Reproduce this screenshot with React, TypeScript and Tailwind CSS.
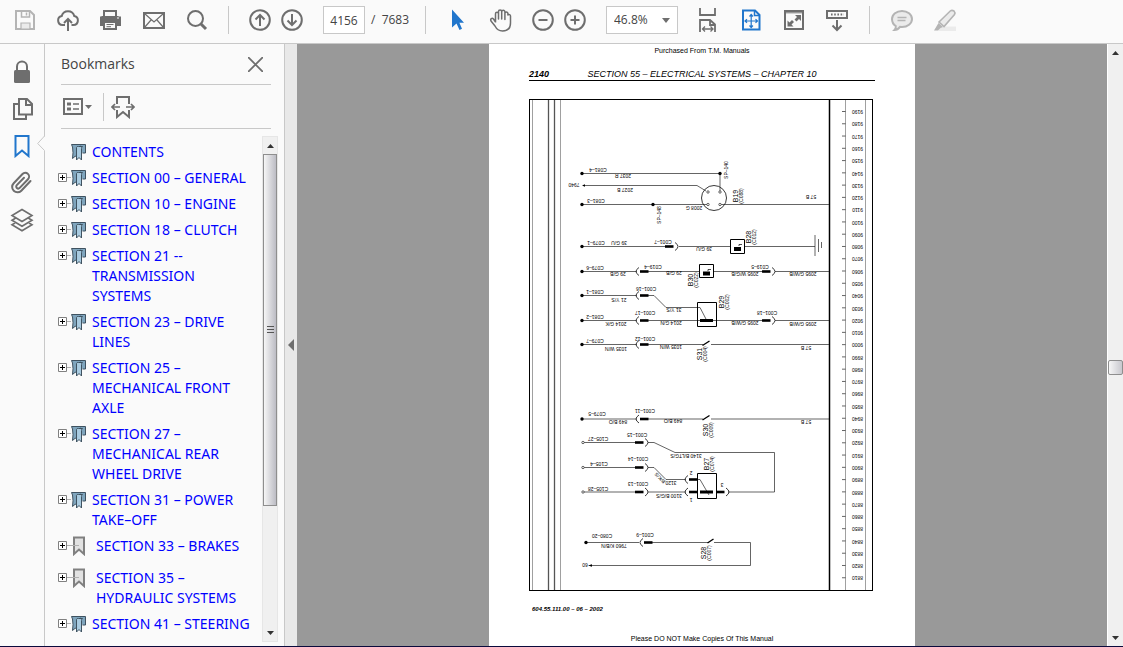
import type { ReactNode } from 'react';

const BOOKMARKS = [
  { title: ['CONTENTS'], kind: 'leaf' },
  { title: ['SECTION 00 – GENERAL'], kind: 'group' },
  { title: ['SECTION 10 – ENGINE'], kind: 'group' },
  { title: ['SECTION 18 – CLUTCH'], kind: 'group' },
  { title: ['SECTION 21 --', 'TRANSMISSION', 'SYSTEMS'], kind: 'group' },
  { title: ['SECTION 23 – DRIVE', 'LINES'], kind: 'group' },
  { title: ['SECTION 25 –', 'MECHANICAL FRONT', 'AXLE'], kind: 'group' },
  { title: ['SECTION 27 –', 'MECHANICAL REAR', 'WHEEL DRIVE'], kind: 'group' },
  { title: ['SECTION 31 – POWER', 'TAKE–OFF'], kind: 'group' },
  { title: ['SECTION 33 – BRAKES'], kind: 'plain' },
  { title: ['SECTION 35 –', 'HYDRAULIC SYSTEMS'], kind: 'plain' },
  { title: ['SECTION 41 – STEERING'], kind: 'group' },
];

// text, centre x, centre y
type Label = [string, number, number];

// wire and connector labels, printed upside down
const WIRE_LABELS: Label[] = [
  ['C081–4', 69, 71], ['2037 R', 94, 77], ['7940', 45, 86], ['2027 B', 96, 91],
  ['C081–3', 67, 102], ['2008 G', 165, 109], ['57 B', 282, 98],
  ['C079–1', 67, 144], ['39 G/U', 90, 144], ['C001–7', 134, 143], ['39 G/U', 175, 150],
  ['C079–6', 66, 169], ['29 G/B', 89, 175], ['C019–4', 124, 168], ['29 G/B', 145, 174],
  ['C019–5', 231, 168], ['2095 W/G/B', 216, 175], ['2095 G/W/B', 274, 175],
  ['C081–1', 66, 193], ['21 Y/S', 90, 201], ['C001–16', 117, 190], ['31 Y/S', 145, 211],
  ['C081–2', 66, 218], ['2014 G/K', 87, 225], ['C001–17', 116, 214], ['2014 G/N', 142, 224],
  ['C001–18', 238, 214], ['2095 G/W/B', 216, 224], ['2095 G/W/B', 274, 225],
  ['C079–7', 66, 242], ['1035 W/N', 87, 250], ['C001–12', 116, 240], ['1035 W/N', 142, 248], ['57 B', 277, 249],
  ['C079–5', 68, 315], ['849 B/O', 89, 323], ['C001–11', 116, 312], ['849 B/O', 144, 322], ['57 B', 277, 323],
  ['C105–27', 69, 340], ['C001–15', 108, 336], ['3140 B/LTG/S', 157, 357],
  ['C105–4', 70, 365], ['C001–14', 109, 360], ['3120', 142, 384],
  ['C105–28', 69, 390], ['C001–13', 109, 385], ['3100 B/G/S', 140, 397],
  ['2', 162, 374], ['1', 162, 401], ['3', 193, 386],
  ['C080–20', 73, 437], ['7960 K/B/N', 85, 447], ['C001–9', 116, 436], ['60', 56, 466],
];

// component name, connector, centre x, centre y
const PARTS: [string, string, number, number][] = [
  ['B19', '(C088)', 206, 97],
  ['B28', '(C012)', 219, 138],
  ['B30', '(C022)', 161, 181],
  ['B29', '(C002)', 192, 203],
  ['S31', '(C004)', 170, 255],
  ['S30', '(C009)', 176, 331],
  ['B27', '(C074)', 177, 365],
  ['S28', '(C007)', 174, 454],
];

const WIRES = [
  'M53 74.5H191V93', 'M55 86.5H168L177 92', 'M53 105.5H179', 'M191 105.5H300',
  'M53 147.5H136', 'M150 147.5H201', 'M215 147.5H286M286 136V157M289.5 140V153M292.5 143V149',
  'M53 172.5H108', 'M119 172.5H170', 'M185 172.5H233', 'M246 172.5H300',
  'M53 196.5H108', 'M119 196.5H125L137 208.5H171L178 222',
  'M53 221.5H108', 'M119 221.5H233', 'M246 221.5H300',
  'M53 245.5H108', 'M119 245.5H174', 'M182 245.5H300',
  'M53 320H108', 'M119 320H174', 'M182 320H300',
  'M55 343.5H106', 'M119 343.5H125L146 353.5H245.5V393H199',
  'M55 368.5H106', 'M119 368.5H125L137 380.5H157', 'M168 380.5H171L180 396',
  'M55 393H106', 'M119 393H157',
  'M57 443.5H110', 'M123 443.5H179', 'M185 443.5H221.5V466.5H61',
];

// bar start x, y, side of the arc
const CONNECTORS: [number, number, 'left' | 'right'][] = [
  [136, 147.5, 'right'], [111, 172.5, 'left'], [233, 172.5, 'right'],
  [111, 196.5, 'left'], [111, 221.5, 'left'], [233, 221.5, 'right'], [111, 245.5, 'left'],
  [111, 320, 'left'], [106, 343.5, 'right'], [106, 368.5, 'right'], [106, 393, 'right'],
  [160, 380.5, 'left'], [160, 393, 'left'], [187, 393, 'right'], [115, 443.5, 'left'],
];

const DOTS = [
  [53, 74.5], [191, 74.5], [53, 105.5], [124, 105.5], [53, 147.5], [53, 172.5],
  [53, 196.5], [53, 221.5], [53, 245.5], [53, 320], [57, 443.5],
];

const PINS = [[179, 93], [191, 93], [179, 105.5], [191, 105.5], [54, 343.5], [54, 368.5], [54, 393]];

const SCALE = Array.from({ length: 39 }, (_, i) => 9190 - i * 10);

function Icon({ children }: { children: ReactNode }) {
  return (
    <svg width="24" height="24" viewBox="0 0 24 24" fill="none" stroke="currentColor" strokeWidth="2" aria-hidden="true">
      {children}
    </svg>
  );
}

function ToolButton({ label, className = 'w-[43px] text-[#6e6e6e]', children }: { label: string; className?: string; children: ReactNode }) {
  return (
    <button type="button" aria-label={label} className={`flex h-10 shrink-0 items-center justify-center ${className}`}>
      <Icon>{children}</Icon>
    </button>
  );
}

function Toolbar() {
  return (
    <header className="flex h-11 shrink-0 items-start overflow-hidden border-b border-[#c8c8c8] bg-[#fafafa] pl-[3px] font-['Open_Sans','Noto_Sans',sans-serif]">
      <ToolButton label="Save" className="w-[43px] text-[#b4b4b4]">
        <path d="M3 3h14l4 4v14H3z" />
        <path d="M8.500 3v6h8V3M13.500 4.500v3" strokeWidth="1.500" />
        <path d="M8 21v-6h9v6z" fill="#ebebeb" strokeWidth="1.200" />
      </ToolButton>
      <ToolButton label="Upload">
        <path d="M9 17H6.500a4.500 4.500 0 0 1-.8-8.900 6.500 6.500 0 0 1 12.600 0A4.500 4.500 0 0 1 17.500 17H15.500" />
        <path d="M12 23V11.500M8 15l4-4 4 4" />
      </ToolButton>
      <ToolButton label="Print">
        <path d="M5 9V3h12v6" />
        <path d="M1 8.500h1.500V8h17v.5H22V18H1z" fill="currentColor" stroke="none" />
        <path d="M5 14h12v7H5z" fill="#fafafa" />
        <path d="M7.500 16.500h7M7.500 18.700h4.500" strokeWidth="1" />
        <path d="M18 10h2" stroke="#fafafa" strokeWidth="1" />
      </ToolButton>
      <ToolButton label="Email">
        <path d="M2 5h20v15H2z" />
        <path d="M2.500 5.500 12 14l9.500-8.500M2.500 19.500 9 12M21.500 19.500 15 12" strokeWidth="1.200" />
      </ToolButton>
      <ToolButton label="Search">
        <circle cx="10.500" cy="10.500" r="7.500" />
        <path d="m15.500 15.500 5.500 5.500" strokeWidth="3" />
      </ToolButton>
      <div className="mt-1.5 mr-[15px] ml-2.5 h-7 w-px shrink-0 bg-[#c8c8c8]" />
      <ToolButton label="Previous page" className="w-8 text-[#6e6e6e]">
        <circle cx="12" cy="12" r="9.800" />
        <path d="M12 18V7M7.500 11.500 12 7l4.500 4.500" />
      </ToolButton>
      <ToolButton label="Next page" className="w-8 text-[#6e6e6e]">
        <circle cx="12" cy="12" r="9.800" />
        <path d="M12 6v11M7.500 12.500 12 17l4.500-4.500" />
      </ToolButton>
      <input
        aria-label="Page number"
        defaultValue="4156"
        className="mt-1.5 ml-[15px] h-7 w-[42px] shrink-0 border border-[#c8c8c8] bg-white text-center text-xs text-[#444]"
      />
      <span className="ml-1.5 h-10 w-12 shrink-0 text-xs leading-10 whitespace-pre text-[#444]">
        {'/  7683'}
      </span>
      <div className="mt-1.5 mr-2.5 ml-1.5 h-7 w-px shrink-0 bg-[#c8c8c8]" />
      <ToolButton label="Select tool" className="w-[43px] text-[#2176cc]">
        <path d="M6 1.500v18l4.500-4 3 6.500 2.500-1.200-2.600-6H18z" fill="currentColor" stroke="none" />
      </ToolButton>
      <ToolButton label="Hand tool">
        <path
          d="M6.500 14.500V5.800a1.500 1.500 0 0 1 3 0V11 3.500a1.500 1.500 0 0 1 3.200 0V11 3.800a1.500 1.500 0 0 1 3.200 0V11.500 5.500a1.500 1.500 0 0 1 3 0V7a1.500 1.500 0 0 1 2.600 1V15c0 5-3 8-8 8-4 0-6-2-7.500-5l-4-5c-1-2 1-3.500 2.500-2l2 3"
          strokeWidth="1.500"
          strokeLinejoin="round"
        />
      </ToolButton>
      <ToolButton label="Zoom out" className="ml-[5px] w-8 text-[#6e6e6e]">
        <circle cx="12" cy="12" r="9.800" />
        <path d="M7.500 12h9" />
      </ToolButton>
      <ToolButton label="Zoom in" className="w-8 text-[#6e6e6e]">
        <circle cx="12" cy="12" r="9.800" />
        <path d="M7.500 12h9M12 7.500v9" />
      </ToolButton>
      <div className="relative mt-1.5 mr-2 ml-[15px] shrink-0">
        <select
          aria-label="Zoom level"
          className="h-7 w-[72px] appearance-none border border-[#c8c8c8] bg-white pl-[7px] text-xs text-[#444]"
        >
          <option>46.8%</option>
        </select>
        <svg className="pointer-events-none absolute top-3 right-2" width="8" height="5" aria-hidden="true">
          <path d="M0 0h8L4 5z" fill="#6e6e6e" />
        </svg>
      </div>
      <ToolButton label="Fit width">
        <path d="M4 0v7h15V0M4 24V12h10l5 4.500V24M14 12v5h5" strokeWidth="1.800" />
        <path d="M7 21h10M9 18.500 6.500 21 9 23.500M14.500 18.500 17 21l-2.500 2.500" strokeWidth="1.300" />
      </ToolButton>
      <ToolButton label="Fit page" className="w-[43px] text-[#2176cc]">
        <path d="M4 2.500h12l4.500 4.500v14.500H4z" />
        <path d="M15.500 2.500V7.500h5" strokeWidth="1.500" />
        <path d="M12.200 7v12M6.500 13h11.500M10.500 8.500l1.700-2 1.700 2M10.500 17.500l1.700 2 1.700-2M8 11.300 6 13l2 1.700M16.500 11.300l2 1.700-2 1.700" strokeWidth="1.200" />
      </ToolButton>
      <ToolButton label="Full screen">
        <path d="M3 3h18v18H3z" />
        <path d="M4 4.800h16" strokeWidth="1" />
        <path d="M13 7h6v6l-2-2-2.500 2.500-2-2L15 9zM11.500 18.500h-6v-6l2 2L10 12l2 2-2.500 2.500z" fill="currentColor" stroke="none" />
      </ToolButton>
      <ToolButton label="Read mode">
        <path d="M2 3h20v7H2z" />
        <path d="M6 6.500h13" strokeDasharray="1.600 1.600" />
        <path d="M12 12v10M7.500 17.500 12 22l4.500-4.500" />
      </ToolButton>
      <div className="mr-2.5 ml-[11px] mt-1.5 h-7 w-px shrink-0 bg-[#c8c8c8]" />
      <ToolButton label="Comment" className="w-[43px] text-[#b4b4b4]">
        <path d="M12 3c5.500 0 10 3.500 10 8s-4.500 8-10 8l-2-.1C8.500 21 7 22 4.500 22c1.200-1.200 1.500-2.500 1.300-4C3.300 16.500 2 14 2 11c0-4.500 4.500-8 10-8z" fill="#ebebeb" />
        <path d="M7.500 9.500h9M7.500 12.500h8" strokeWidth="1.300" />
      </ToolButton>
      <ToolButton label="Highlight" className="w-[43px] text-[#b4b4b4]">
        <path d="M8 18.500h15V23H5z" fill="#ebebeb" stroke="none" />
        <path d="M6 14 17.500 2.800q1.500-1 3.500.2 1.500 1.500.5 3.500L11 18.500z" fill="#ebebeb" strokeWidth="1.600" />
        <path d="m5.500 15 4.500 4-2.500 1L5 22.500H1z" fill="currentColor" stroke="none" />
      </ToolButton>
    </header>
  );
}

function NavRail() {
  return (
    <nav className="relative flex w-[45px] shrink-0 flex-col border-r border-[#c8c8c8] bg-[#fafafa] pt-[9px] text-[#6e6e6e]">
      {[
        {
          label: 'Security',
          art: (
            <>
              <path d="M7 11V6.500a5 5 0 0 1 10 0V11" />
              <rect x="4" y="10" width="16" height="13" rx="1.500" fill="currentColor" stroke="none" />
            </>
          ),
        },
        {
          label: 'Page thumbnails',
          art: (
            <>
              <path d="M9 2h8l5 5v10.500H9zM16 2v6h6" />
              <path d="M8 7H4v15h12v-4" />
            </>
          ),
        },
        { label: 'Bookmarks', art: <path d="M5.500 2h13v20L12 16.500 5.500 22z" /> },
        {
          label: 'Attachments',
          art: (
            <path
              d="m20.500 10-9.200 9.700a5.300 5.300 0 0 1-7.600-7.500L12.500 3a3.800 3.800 0 0 1 5.500 5.300l-8.300 8.600a2 2 0 0 1-2.900-2.800L14 6.800"
              strokeLinecap="round"
            />
          ),
        },
        {
          label: 'Layers',
          art: (
            <path d="m12 1.500 10 6-10 6-10-6zM5 10.500l-3 1.700 10 6 10-6-3-1.700M5 15l-3 1.700 10 6 10-6L19 15" strokeWidth="1.600" />
          ),
        },
      ].map((item) => (
        <button
          key={item.label}
          type="button"
          aria-label={item.label}
          className={`flex h-[37px] items-center justify-center ${item.label === 'Bookmarks' ? 'text-[#2176cc]' : ''}`}
        >
          <Icon>{item.art}</Icon>
        </button>
      ))}
      <svg className="absolute top-[92px] -right-px" width="8" height="16" aria-hidden="true">
        <path d="M8 0 1 7.500 8 15z" fill="#fafafa" />
        <path d="M7.500 0 .7 7.500l6.800 7" fill="none" stroke="#c8c8c8" />
      </svg>
    </nav>
  );
}

function BookmarkGlyph({ plain }: { plain: boolean }) {
  if (plain) {
    return (
      <svg width="20" height="20" aria-hidden="true" className="shrink-0">
        <path d="M3 1.500h10V18l-5-4.500L3 18z" fill="#e2e2e2" stroke="#808080" strokeWidth="2" />
        <path d="M0 9.500h8" stroke="#b0b0b0" />
      </svg>
    );
  }
  return (
    <svg width="16" height="20" aria-hidden="true" className="shrink-0">
      <path d="M.5 2.500h9v4h-3v10l-2-2.500-3 2.500q1-6 0-11.500z" fill="#7fa5bd" stroke="#3f5260" />
      <path d="M9 2.500h5.500v8.500h-3" fill="#7fa5bd" stroke="#3f5260" />
      <path d="M5.500 5.500Q6 4 7.500 4.500h4q-1 .5-1 2V18L8 15.500 5.500 18z" fill="#a9cbe0" stroke="#3f5260" />
    </svg>
  );
}

function BookmarksPanel() {
  return (
    <aside className="flex w-[240px] shrink-0 flex-col border-r border-[#c8c8c8] bg-[#fafafa] font-['Open_Sans','Noto_Sans',sans-serif]">
      <div className="mr-[13px] ml-4 flex h-[41px] shrink-0 items-center justify-between border-b border-[#c8c8c8]">
        <h2 className="text-sm text-[#444]">Bookmarks</h2>
        <button type="button" aria-label="Close" className="mr-2 text-[#6e6e6e]">
          <svg width="15" height="15" aria-hidden="true">
            <path d="m0 0 15 15M15 0 0 15" stroke="currentColor" strokeWidth="1.800" />
          </svg>
        </button>
      </div>
      <div className="mr-[13px] ml-4 flex h-11 shrink-0 items-center border-b border-[#c8c8c8] text-[#6e6e6e]">
        <button type="button" aria-label="Options" className="ml-px">
          <svg width="30" height="20" fill="none" stroke="currentColor" aria-hidden="true">
            <path d="M2 2h18v15H2z" strokeWidth="2" />
            <path d="M5 7h4M5 12h4" strokeWidth="3" />
            <path d="M11 7h6M11 12h6" strokeWidth="1.500" />
            <path d="M23 8h7l-3.500 4z" fill="currentColor" stroke="none" />
          </svg>
        </button>
        <div className="mr-[7px] ml-[11px] h-7 w-px bg-[#c8c8c8]" />
        <button type="button" aria-label="Expand current bookmark">
          <Icon>
            <path d="M6 9V2h12v7M6 15v7l6-5 6 5v-7" />
            <path d="M9 12H1M4 9l-3 3 3 3M15 12h8M20 9l3 3-3 3" strokeWidth="1.700" />
          </Icon>
        </button>
      </div>
      <div className="mt-[7px] mb-1 flex min-h-0 flex-1">
        <ul className="min-w-0 flex-1 overflow-hidden pt-1.5 pl-[13px] font-['Noto_Sans','Open_Sans',sans-serif] text-sm leading-5">
          {BOOKMARKS.map((item) => (
            <li
              key={item.title[0]}
              className={`flex items-start ${item.title[0] === 'SECTION 33 – BRAKES' ? 'mb-3' : 'mb-1.5'}`}
            >
              {item.kind === 'leaf' ? (
                <span className="w-[13px] shrink-0" />
              ) : (
                <button type="button" aria-label="Expand" className="h-5 w-[13px] shrink-0">
                  <svg width="13" height="20" aria-hidden="true">
                    <path d="M.5 5.500h8v8h-8z" fill="#fff" stroke="#808080" />
                    <path d="M2 9.500h5M4.500 7v5" stroke="#000" />
                    <path d="M9 9.500h4" stroke="#b0b0b0" />
                  </svg>
                </button>
              )}
              <BookmarkGlyph plain={item.kind === 'plain'} />
              <a href="#" className="ml-[5px] whitespace-nowrap text-[#0000ff]">
                {item.title.map((line) => (
                  <span key={line} className="block">
                    {line}
                  </span>
                ))}
              </a>
            </li>
          ))}
        </ul>
        <div className="mr-1.5 flex w-4 shrink-0 flex-col border border-[#e6e6e6] bg-[#f0f0f0]">
          <ScrollArrow up />
          <div className="flex h-[352px] shrink-0 items-center justify-center border border-[#8e8e8e] bg-linear-to-r from-[#f6f6f6] to-[#bcbcc4]">
            <svg width="7" height="8" aria-hidden="true">
              <path d="M0 .5h7M0 3.500h7M0 6.500h7" stroke="#555" />
            </svg>
          </div>
          <div className="flex-1" />
          <ScrollArrow />
        </div>
      </div>
    </aside>
  );
}

function ScrollArrow({ up = false }: { up?: boolean }) {
  return (
    <button type="button" aria-label={up ? 'Scroll up' : 'Scroll down'} className="flex h-[17px] shrink-0 items-center justify-center">
      <svg width="7" height="4" aria-hidden="true">
        <path d={up ? 'M0 4h7L3.500 0z' : 'M0 0h7L3.500 4z'} fill="#333" />
      </svg>
    </button>
  );
}

function WiringDiagram() {
  return (
    <svg
      width="345"
      height="492"
      viewBox="0 0 345 492"
      fill="none"
      stroke="#222"
      strokeWidth="0.7"
      role="img"
      aria-label="Wiring diagram"
      className="block"
    >
      <rect x="0.5" y="0.5" width="343" height="491" stroke="#000" strokeWidth="1" />
      <path d="M3.500 1v490M31.500 1v490M316.500 1v490M336.500 1v490" stroke="#777" />
      <path d="M19.500 1v490M25.500 1v490" stroke="#555" strokeWidth="1.300" />
      <path d="M300.500 1v490" stroke="#000" strokeWidth="1.500" />

      {WIRES.map((d) => (
        <path key={d} d={d} />
      ))}

      {CONNECTORS.map(([x, y, side]) => (
        <g key={`${x}-${y}`}>
          <path d={`M${x} ${y}h8.500`} stroke="#000" strokeWidth="2.600" />
          <path
            d={side === 'left' ? `M${x - 1} ${y - 4}q-6 4 0 8` : `M${x + 10} ${y - 4}q6 4 0 8`}
            strokeWidth="0.900"
          />
        </g>
      ))}

      {DOTS.map(([x, y]) => (
        <circle key={`${x}-${y}`} cx={x} cy={y} r="1.700" fill="#000" stroke="none" />
      ))}
      {PINS.map(([x, y]) => (
        <circle key={`${x}-${y}`} cx={x} cy={y} r="1.200" fill="#fff" />
      ))}
      <circle cx="185" cy="99" r="12.500" strokeWidth="0.900" />
      <path d="m53 86.500 3-1.300v2.600zM59 466.500l4-1.300v2.600z" fill="#000" stroke="none" />

      {/* sensors and switches */}
      <g stroke="#000">
        <path d="M201.500 140.500h14v14h-14zM170.500 165.500h14v13h-14zM168.500 203.500h19v24h-19zM168.500 374.500h19v25h-19z" strokeWidth="1" />
        <path d="M205 150h7M174 174.500h7" strokeWidth="4" />
        <path d="M210 147v-1.500h3M179 172v-1.500h3" />
        <path d="M171 221.500h13M171 393h13" strokeWidth="3.200" />
        <path d="m173.500 246.500 7-4.500M173.500 321l7-4.500M178.500 444l6-4" strokeWidth="1.400" />
      </g>

      <g fill="#000" stroke="none" fontFamily="Liberation Sans, sans-serif" fontSize="5" textAnchor="middle">
        {WIRE_LABELS.map(([text, x, y]) => (
          <text key={`${text}-${x}-${y}`} transform={`translate(${x} ${y}) rotate(180)`} dy="1.800">
            {text}
          </text>
        ))}
        <text transform="translate(131 379) rotate(225)" dy="1.800">
          B/K/S
        </text>
        <text transform="translate(197 71) rotate(-90)" dy="1.800">
          SP–140
        </text>
        <text transform="translate(130 116) rotate(-90)" dy="1.800">
          SP–148
        </text>
        {PARTS.map(([name, connector, x, y]) => (
          <g key={name} transform={`translate(${x} ${y}) rotate(-90)`}>
            <text dy="2.500" fontSize="7">
              {name}
            </text>
            <text y="7.500">{connector}</text>
          </g>
        ))}
        {SCALE.map((value, i) => (
          <g key={value} transform={`translate(0 ${12.5 + i * 12.27})`}>
            <path d="M313 0h3.500" stroke="#222" />
            <text transform="translate(328.500 0.500) rotate(180)" dy="1.800">
              {value}
            </text>
          </g>
        ))}
      </g>
    </svg>
  );
}

function DocumentView() {
  return (
    <main className="flex min-w-0 flex-1 bg-[#999]">
      <div className="min-w-0 flex-1 overflow-hidden">
        <article className="mx-auto flex h-full w-[426px] flex-col bg-white px-10 font-['Liberation_Sans',sans-serif] text-black">
          <p className="mt-0.5 text-center text-[7px] leading-[10px]">Purchased From T.M. Manuals</p>
          <div className="mt-3 grid h-[13px] shrink-0 grid-cols-[1fr_auto_1fr] border-b border-black text-[9px] leading-3 italic">
            <span className="font-bold">2140</span>
            <h1>SECTION 55 – ELECTRICAL SYSTEMS – CHAPTER 10</h1>
          </div>
          <div className="mt-[18px] shrink-0">
            <WiringDiagram />
          </div>
          <p className="mt-3.5 ml-[3px] text-[6px] leading-2 font-bold italic">604.55.111.00 – 06 – 2002</p>
          <p className="mt-[21px] text-center text-[7px] leading-[10px]">Please DO NOT Make Copies Of This Manual</p>
        </article>
      </div>
      <div className="flex w-4 shrink-0 flex-col border-l border-white bg-[#f0f0f0]">
        <ScrollArrow up />
        <div className="flex-[299]" />
        <div className="h-[15px] shrink-0 rounded-xs border border-[#8e8e8e] bg-linear-to-r from-[#f6f6f6] to-[#c8c8ce]" />
        <div className="flex-[254]" />
        <ScrollArrow />
      </div>
    </main>
  );
}

export default function App() {
  return (
    <div className="flex h-screen flex-col overflow-hidden border-b border-[#0a0a3c] bg-[#fafafa]">
      <Toolbar />
      <div className="flex min-h-0 flex-1">
        <NavRail />
        <BookmarksPanel />
        <button type="button" aria-label="Collapse panel" className="flex w-3 shrink-0 items-center justify-center bg-[#e8e8e8]">
          <svg width="6" height="12" aria-hidden="true">
            <path d="M6 0v12L0 6z" fill="#6e6e6e" />
          </svg>
        </button>
        <DocumentView />
      </div>
    </div>
  );
}
